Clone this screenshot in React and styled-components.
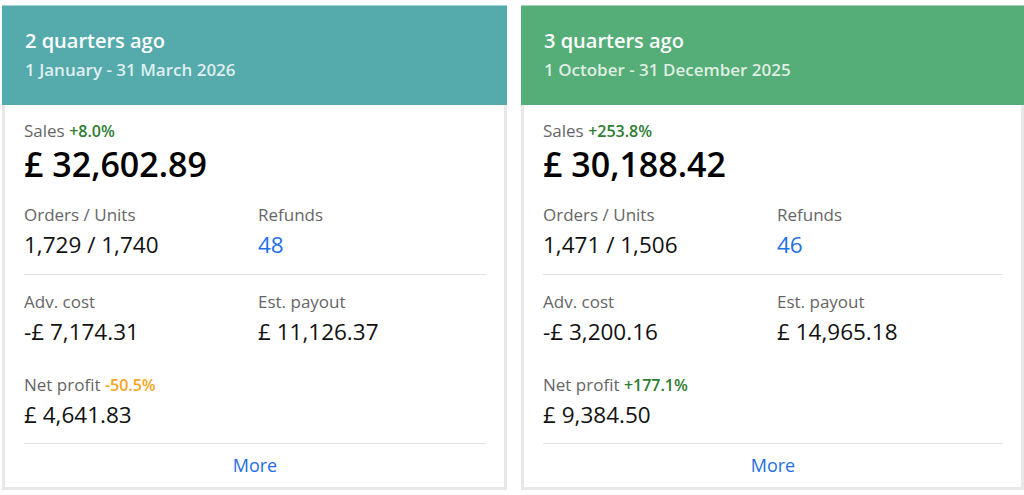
import React from "react";
import styled, { createGlobalStyle } from "styled-components";

const GlobalStyle = createGlobalStyle`
  html, body {
    margin: 0;
    padding: 0;
    background: #ffffff;
    overflow: hidden;
  }
  body {
    font-family: "Open Sans", "Noto Sans", Arial, sans-serif;
    color: #111;
  }
`;

const Board = styled.div`
  display: grid;
  grid-template-columns: 505px 503px;
  column-gap: 14px;
  padding: 5px 0 0 2px;
  align-items: start;
`;

const Card = styled.section`
  display: flex;
  flex-direction: column;
  background: #fff;
`;

const Header = styled.header`
  background: ${(p) => p.$bg};
  border-top: 1px solid ${(p) => p.$edge};
  padding: 21px 23px 24px;
  display: flex;
  flex-direction: column;
  gap: 5px;
`;

const Title = styled.h2`
  margin: 0;
  font-size: 20px;
  line-height: 27px;
  font-weight: 600;
  color: #ffffff;
`;

const Period = styled.div`
  font-size: 17px;
  line-height: 22px;
  font-weight: 600;
  color: rgba(255, 255, 255, 0.82);
`;

const Body = styled.div`
  border: 3px solid #e8e8e8;
  border-top: none;
  padding: 16px 18px 0 19px;
  display: flex;
  flex-direction: column;
`;

const Label = styled.div`
  font-size: 17px;
  line-height: 22px;
  color: #666;
`;

const SalesLabel = styled(Label)`
  line-height: 20px;
`;

const Change = styled.span`
  font-size: 16px;
  font-weight: 600;
  color: ${(p) => (p.$down ? "#f5a623" : "#2e7d32")};
`;

const Headline = styled.div`
  font-size: 34px;
  line-height: 46px;
  font-weight: 600;
  color: #000;
`;

const Group = styled.div`
  display: grid;
  grid-template-columns: 234px 1fr;
  row-gap: 27px;
  padding: ${(p) => p.$pad};
  border-bottom: 1px solid #e2e2e2;
`;

const Stat = styled.div`
  display: flex;
  flex-direction: column;
  gap: 4px;
`;

const Value = styled.div`
  font-size: 22.5px;
  line-height: 30px;
  color: ${(p) => (p.$link ? "#1f6fe5" : "#111")};
`;

const MoreLink = styled.a`
  display: block;
  text-align: center;
  font-size: 18px;
  line-height: 43px;
  color: #1f6fe5;
  text-decoration: none;
  cursor: pointer;
`;

const quarters = [
  {
    title: "2 quarters ago",
    period: "1 January - 31 March 2026",
    bg: "#55abac",
    edge: "#a4d2d2",
    salesChange: "+8.0%",
    sales: "£ 32,602.89",
    orders: "1,729 / 1,740",
    refunds: "48",
    adv: "-£ 7,174.31",
    payout: "£ 11,126.37",
    profitChange: "-50.5%",
    profitDown: true,
    profit: "£ 4,641.83",
  },
  {
    title: "3 quarters ago",
    period: "1 October - 31 December 2025",
    bg: "#55ad77",
    edge: "#a5d5b6",
    salesChange: "+253.8%",
    sales: "£ 30,188.42",
    orders: "1,471 / 1,506",
    refunds: "46",
    adv: "-£ 3,200.16",
    payout: "£ 14,965.18",
    profitChange: "+177.1%",
    profitDown: false,
    profit: "£ 9,384.50",
  },
];

function QuarterCard({ q }) {
  return (
    <Card>
      <Header $bg={q.bg} $edge={q.edge}>
        <Title>{q.title}</Title>
        <Period>{q.period}</Period>
      </Header>
      <Body>
        <SalesLabel>
          Sales <Change>{q.salesChange}</Change>
        </SalesLabel>
        <Headline>{q.sales}</Headline>
        <Group $pad="17px 0 14px">
          <Stat>
            <Label>Orders / Units</Label>
            <Value>{q.orders}</Value>
          </Stat>
          <Stat>
            <Label>Refunds</Label>
            <Value $link>{q.refunds}</Value>
          </Stat>
        </Group>
        <Group $pad="16px 0 13px">
          <Stat>
            <Label>Adv. cost</Label>
            <Value>{q.adv}</Value>
          </Stat>
          <Stat>
            <Label>Est. payout</Label>
            <Value>{q.payout}</Value>
          </Stat>
          <Stat>
            <Label>
              Net profit <Change $down={q.profitDown}>{q.profitChange}</Change>
            </Label>
            <Value>{q.profit}</Value>
          </Stat>
        </Group>
        <MoreLink>More</MoreLink>
      </Body>
    </Card>
  );
}

export default function App() {
  return (
    <>
      <GlobalStyle />
      <Board>
        {quarters.map((q) => (
          <QuarterCard key={q.title} q={q} />
        ))}
      </Board>
    </>
  );
}
